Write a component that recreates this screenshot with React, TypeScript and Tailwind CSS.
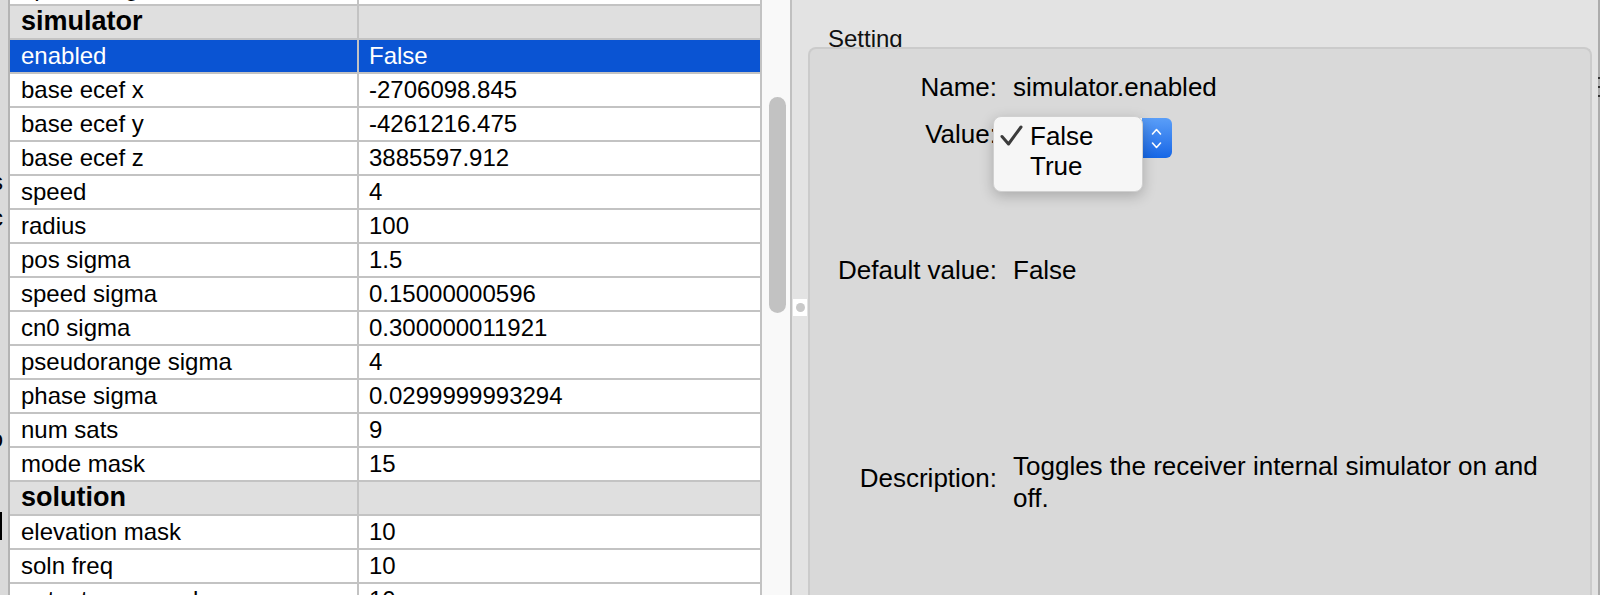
import React from "react";

type Row = { k: string; v?: string; header?: boolean; selected?: boolean };

const rows: Row[] = [
  { k: "epoch length", v: "" },
  { k: "simulator", header: true },
  { k: "enabled", v: "False", selected: true },
  { k: "base ecef x", v: "-2706098.845" },
  { k: "base ecef y", v: "-4261216.475" },
  { k: "base ecef z", v: "3885597.912" },
  { k: "speed", v: "4" },
  { k: "radius", v: "100" },
  { k: "pos sigma", v: "1.5" },
  { k: "speed sigma", v: "0.15000000596" },
  { k: "cn0 sigma", v: "0.300000011921" },
  { k: "pseudorange sigma", v: "4" },
  { k: "phase sigma", v: "0.0299999993294" },
  { k: "num sats", v: "9" },
  { k: "mode mask", v: "15" },
  { k: "solution", header: true },
  { k: "elevation mask", v: "10" },
  { k: "soln freq", v: "10" },
  { k: "output every n obs", v: "10" },
];

function TableRow({ r }: { r: Row }) {
  if (r.header) {
    return (
      <div className="flex h-[34px] border-b-2 border-[#c3c3c3] bg-[#dfdfdf]">
        <div className="w-[349px] shrink-0 border-r-2 border-[#c3c3c3] pl-[11px] text-[27px] font-bold leading-[31px] text-black">
          {r.k}
        </div>
        <div className="flex-1" />
      </div>
    );
  }
  const sel = r.selected;
  return (
    <div
      className={
        sel
          ? "flex h-[34px] border-b-2 border-[#c3c3c3] bg-[#0a54d3] text-white"
          : "flex h-[34px] border-b-2 border-[#c3c3c3] bg-white text-black"
      }
    >
      <div className="w-[349px] shrink-0 border-r-2 border-[#c3c3c3] pl-[11px] text-[24px] leading-[31px]">
        {r.k}
      </div>
      <div className="flex-1 pl-[10px] text-[24px] leading-[31px]">{r.v}</div>
    </div>
  );
}

export default function App() {
  return (
    <div className="flex h-[595px] w-[1600px] overflow-hidden bg-[#e3e3e3] font-['Liberation_Sans',Arial,sans-serif] text-black">
      {/* clipped neighbour panel */}
      <div className="relative w-[8px] shrink-0 overflow-hidden bg-[#dadada]">
        <span className="absolute right-[5px] top-[168px] text-[24px] leading-[28px] text-black">s</span>
        <span className="absolute right-[5px] top-[204px] text-[24px] leading-[28px] text-black">c</span>
        <span className="absolute right-[5px] top-[425px] text-[24px] leading-[28px] text-black">o</span>
        <div className="absolute left-0 top-[512px] h-[28px] w-[2px] bg-black" />
      </div>
      <div className="w-[2px] shrink-0 bg-[#b4b4b4]" />

      {/* settings table */}
      <div className="w-[752px] shrink-0 border-r-2 border-[#c3c3c3] bg-white">
        <div className="-mt-[28px]">
          {rows.map((r, i) => (
            <TableRow key={i} r={r} />
          ))}
        </div>
      </div>

      {/* scrollbar */}
      <div className="w-[30px] shrink-0 border-r-2 border-[#c0c0c0] bg-[#f9f9f9] pl-[7px] pt-[97px]">
        <div className="h-[216px] w-[17px] rounded-full bg-[#c2c2c2]" />
      </div>

      {/* splitter */}
      <div className="flex w-[16px] shrink-0 flex-col items-center pt-[299px]">
        <div className="flex h-[17px] w-[14px] items-center justify-center bg-white">
          <div className="h-[9px] w-[9px] rounded-full bg-[#c9c9c9]" />
        </div>
      </div>

      {/* setting panel */}
      <div className="flex w-[784px] shrink-0 flex-col">
        <div className="h-[47px] pl-[20px] pt-[27px] text-[24px] leading-[24px] text-[#111]">Setting</div>
        <div className="flex-1 rounded-t-[8px] border-x-2 border-t-2 border-[#cbcbcb] bg-[#d9d9d9] text-[26px] text-black">
          {/* Name */}
          <div className="mt-[22px] flex h-[32px] gap-[16px] leading-[32px]">
            <div className="w-[187px] shrink-0 text-right">Name:</div>
            <div>simulator.enabled</div>
          </div>
          {/* Value */}
          <div className="mt-[15px] flex h-[40px] gap-[16px]">
            <div className="w-[187px] shrink-0 text-right leading-[32px]">Value:</div>
            <div className="relative">
              <div className="flex h-[40px] w-[159px]">
                <div className="h-full w-[129px] bg-white" />
                <div className="h-full w-[30px] rounded-r-[6px] bg-linear-to-b from-[#5a9ef8] to-[#1466e6]">
                  <svg width="30" height="40" viewBox="0 0 30 40">
                    <polyline points="10.5,16 14.5,11.5 18.5,16" fill="none" stroke="white" strokeWidth="1.6" strokeLinecap="round" strokeLinejoin="round" />
                    <polyline points="10.5,25 14.5,29.5 18.5,25" fill="none" stroke="white" strokeWidth="1.6" strokeLinecap="round" strokeLinejoin="round" />
                  </svg>
                </div>
              </div>
              <div className="absolute left-[-20px] top-[-2px] h-[76px] w-[150px] rounded-[8px] border border-[#d0d0d0] bg-[#f6f6f6] pt-[4px] shadow-[0_4px_14px_rgba(0,0,0,0.22)]">
                <div className="relative flex h-[30px] items-center leading-[30px]">
                  <svg className="ml-[6px] shrink-0" width="24" height="22" viewBox="0 0 24 22">
                    <path d="M2 11.5 L8.5 19 L21 2" fill="none" stroke="#3b3b3b" strokeWidth="3" strokeLinecap="round" strokeLinejoin="round" />
                  </svg>
                  <span className="ml-[6px]">False</span>
                </div>
                <div className="h-[30px] pl-[36px] leading-[30px]">True</div>
              </div>
            </div>
          </div>
          {/* Default value */}
          <div className="mt-[96px] flex h-[32px] gap-[16px] leading-[32px]">
            <div className="w-[187px] shrink-0 text-right">Default value:</div>
            <div>False</div>
          </div>
          {/* Description */}
          <div className="mt-[164px] flex gap-[16px]">
            <div className="mt-[12px] w-[187px] shrink-0 text-right leading-[32px]">Description:</div>
            <div className="w-[555px] leading-[32px]">Toggles the receiver internal simulator on and off.</div>
          </div>
        </div>
      </div>

      <div className="w-[6px] shrink-0" />
      <div className="flex w-[2px] shrink-0 flex-col gap-[7px] bg-[#acacac] pt-[77px]">
        <div className="h-[2px] w-[2px] bg-[#333]" />
        <div className="h-[2px] w-[2px] bg-[#333]" />
        <div className="h-[2px] w-[2px] bg-[#333]" />
      </div>
    </div>
  );
}
